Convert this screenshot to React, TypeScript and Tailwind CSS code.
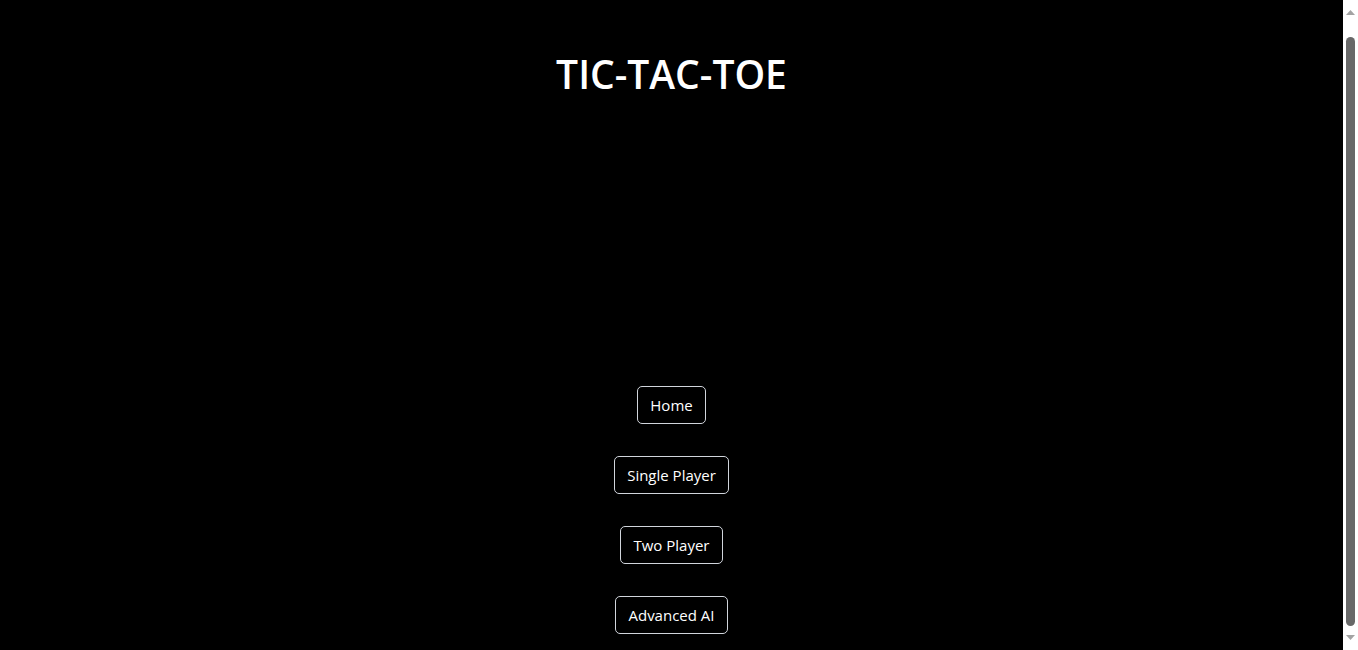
export default function App() {
  const modes = ["Home", "Single Player", "Two Player", "Advanced AI"];

  return (
    <div className="flex h-[650px] overflow-hidden bg-black font-['Open_Sans','Noto_Sans',sans-serif] text-white">
      <main className="flex-1">
        <h1 className="pt-[49px] text-center text-[39px] font-semibold leading-[50px]">
          TIC-TAC-TOE
        </h1>

        <div className="mt-[287px] flex flex-col items-center gap-8">
          {modes.map((mode) => (
            <button
              key={mode}
              className="h-[38px] rounded-[5px] border border-gray-300 px-3 text-[15px] leading-[22px] text-white"
            >
              {mode}
            </button>
          ))}
        </div>
      </main>

      {/* window scrollbar */}
      <div className="flex w-[15px] flex-col items-center bg-white pt-[10px] pb-[10px]">
        <svg width="9" height="5" viewBox="0 0 9 5">
          <path d="M4.5 0L9 5H0z" fill="#a3a3a3" />
        </svg>
        <div className="mt-[22px] w-[9px] flex-1 rounded-full bg-[#686868]" />
        <svg width="9" height="5" viewBox="0 0 9 5" className="mt-[9px]">
          <path d="M0 0H9L4.5 5z" fill="#a3a3a3" />
        </svg>
      </div>
    </div>
  );
}
